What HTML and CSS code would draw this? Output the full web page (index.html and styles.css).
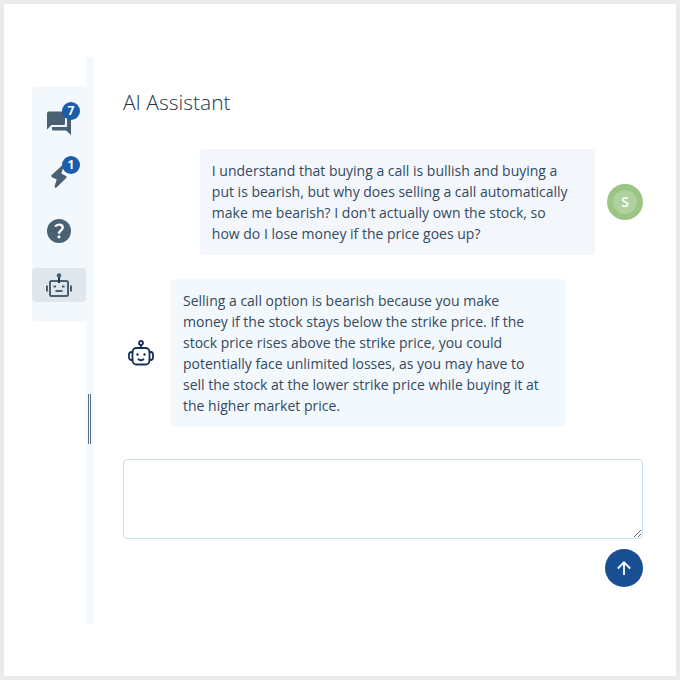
FILE: index.html
```html
<!DOCTYPE html>
<html lang="en">
    <head>
        <meta charset="UTF-8"/>
        <meta name="viewport" content="width=device-width, initial-scale=1">
        <title>AI Assistant</title>
        <link rel="stylesheet" href="styles.css">
    </head>
    <body>
        <div class="Panel">
            <nav class="Tabs">
                <button class="Tab" aria-label="Messages, 7 new">
                    <span class="Glyph">
                        <svg width="24" height="24" viewBox="0 0 24 24"><path fill="currentColor" d="M2 .5h14.500A1.500 1.500 0 0 1 18 2v10.500a1.500 1.500 0 0 1-1.500 1.500H4.500L0 18.500v-16a2 2 0 0 1 2-2zM20 5h2.500A1.500 1.500 0 0 1 24 6.500V24l-5-4.500H6.500A1.500 1.500 0 0 1 5 18v-2h15z"/></svg>
                        <span class="Badge">7</span>
                    </span>
                </button>
                <button class="Tab" aria-label="Activity, 1 new">
                    <span class="Glyph">
                        <svg width="24" height="24" viewBox="0 0 24 24"><path fill="currentColor" d="M15 .5L4.700 10c-.7.700-.6 1.400 0 1.900L9.700 14.500l-2 6.500c-.3 1.700 1 2.300 2 1.300L19.200 13c.6-.7.500-1.500-.2-1.900L14.300 8.500l2.200-6.500c.3-1.500-.7-2.200-1.500-1.500z"/></svg>
                        <span class="Badge">1</span>
                    </span>
                </button>
                <button class="Tab" aria-label="Help">
                    <span class="Glyph">
                        <svg width="24" height="24" viewBox="0 0 24 24"><circle cx="12" cy="12" r="12" fill="currentColor"/><path fill="none" stroke="#fff" stroke-width="2.400" d="M8.200 7.600c.8-1.300 2.200-2 3.900-2 2.200 0 3.600 1.100 3.600 2.900 0 3-3.700 2.800-3.700 6.200"/><circle cx="12" cy="17.800" r="1.600" fill="#fff"/></svg>
                    </span>
                </button>
                <button class="Tab Active" aria-label="AI Assistant">
                    <svg width="26" height="24" viewBox="0 0 26 24"><g fill="none" stroke="currentColor" stroke-width="2"><rect x="4" y="8" width="18" height="15" rx="1.500"/><path d="M1 12.500v6M25 12.500v6"/><path d="M13 3v7" stroke="#1d3347"/></g><circle cx="13" cy="2.500" r="2.300" fill="currentColor"/><path fill="currentColor" d="M7.500 12.500h2.500v2H7.500zM16 12.500h2.500v2H16zM9.500 17h7v2h-7z"/></svg>
                </button>
            </nav>
            <div class="Divider"><span class="Handle"></span></div>
            <main class="Chat">
                <h1>AI Assistant</h1>
                <div class="Message User">
                    <p class="Bubble">I understand that buying a call is bullish and buying a put is bearish, but why does selling a call automatically make me bearish? I don't actually own the stock, so how do I lose money if the price goes up?</p>
                    <span class="Avatar">S</span>
                </div>
                <div class="Message Bot">
                    <span class="Face">
                        <svg width="26" height="26" viewBox="0 0 26 26"><g fill="none" stroke="currentColor" stroke-width="1.800" stroke-linecap="round"><rect x="4.500" y="8" width="17" height="16.500" rx="4"/><path d="M4.500 12H3.500a2.500 2.500 0 0 0-2.500 2.500v3A2.500 2.500 0 0 0 3.500 20h1M21.500 12h1a2.500 2.500 0 0 1 2.500 2.500v3a2.500 2.500 0 0 1-2.500 2.500h-1M13 5.500V8M10.500 19.300c1.500 1.200 3.500 1.200 5 0"/><circle cx="13" cy="3" r="2"/></g><circle cx="9.500" cy="14.500" r="1.200" fill="currentColor"/><circle cx="16.500" cy="14.500" r="1.200" fill="currentColor"/></svg>
                    </span>
                    <p class="Bubble">Selling a call option is bearish because you make money if the stock stays below the strike price. If the stock price rises above the strike price, you could potentially face unlimited losses, as you may have to sell the stock at the lower strike price while buying it at the higher market price.</p>
                </div>
                <form class="Compose">
                    <textarea aria-label="Message"></textarea>
                    <button type="button" class="Send" aria-label="Send">
                        <svg width="14" height="14" viewBox="0 0 14 14"><path fill="none" stroke="currentColor" stroke-width="1.800" d="M7 14V1.500M.8 7.500L7 1.300l6.200 6.200"/></svg>
                    </button>
                </form>
            </main>
        </div>
    </body>
</html>
```
FILE: styles.css
```css
*
{
    box-sizing:border-box;
}
body
{
    margin:0;
    min-height:100vh;
    border:4px solid #ebebeb;
    background:#fff;
    color:#34495e;
    font-family:"Open Sans", sans-serif;
    font-size:14px;
    line-height:21px;
}
button
{
    padding:0;
    border:none;
    font-family:inherit;
    cursor:pointer;
}
svg
{
    display:block;
}

.Panel
{
    display:flex;
    padding:53px 33px 52px 28px;
}

.Tabs
{
    display:flex;
    flex-direction:column;
    align-self:flex-start;
    gap:20px;
    width:54px;
    margin-top:29px;
    padding:20px 0;
    border-radius:4px 0 0 4px;
    background:#f2f8fc;
}
.Tab
{
    display:flex;
    align-items:center;
    justify-content:center;
    height:34px;
    border-radius:4px;
    background:none;
    color:#4a6073;
}
.Tab.Active
{
    background:#dfe6ec;
}
.Glyph
{
    position:relative;
}
.Badge
{
    position:absolute;
    top:-9px;
    right:-9px;
    width:18px;
    height:18px;
    border-radius:50%;
    background:#1a5dab;
    color:#fff;
    font-size:12px;
    font-weight:700;
    line-height:18px;
}

.Divider
{
    display:flex;
    align-items:center;
    justify-content:center;
    width:7px;
    padding-top:157px;
    background:#f2f8fc;
}
.Handle
{
    width:3px;
    height:50px;
    border:solid #5a6f80;
    border-width:0 1px;
}

.Chat
{
    flex:1;
    padding:30px 0 37px 30px;
}
h1
{
    margin:0 0 32px;
    color:#1d3347;
    font-size:21px;
    font-weight:300;
    line-height:30px;
}
.Message
{
    display:flex;
    align-items:center;
    gap:12px;
    margin-bottom:24px;
}
.Message.User
{
    justify-content:flex-end;
}
.Bubble
{
    width:76%;
    margin:0;
    padding:11px 24px 11px 12px;
    border-radius:4px;
    background:#f3f7fc;
}
.Bot .Bubble
{
    background:#f2f8fc;
}
.Avatar
{
    width:36px;
    height:36px;
    border:6px solid #9bc585;
    border-radius:50%;
    background:#afd19d;
    color:#fff;
    font-weight:600;
    line-height:24px;
    text-align:center;
}
.Face
{
    display:flex;
    justify-content:center;
    width:36px;
    color:#14305a;
}

.Compose
{
    display:flex;
    flex-direction:column;
    align-items:flex-end;
    gap:10px;
    margin-top:32px;
}
textarea
{
    display:block;
    width:100%;
    height:80px;
    padding:11px 12px;
    border:1px solid #c5dff3;
    border-radius:4px;
    color:inherit;
    font:inherit;
    resize:vertical;
}
.Send
{
    display:flex;
    align-items:center;
    justify-content:center;
    width:38px;
    height:38px;
    border-radius:50%;
    background:#174f92;
    color:#fff;
}
```
